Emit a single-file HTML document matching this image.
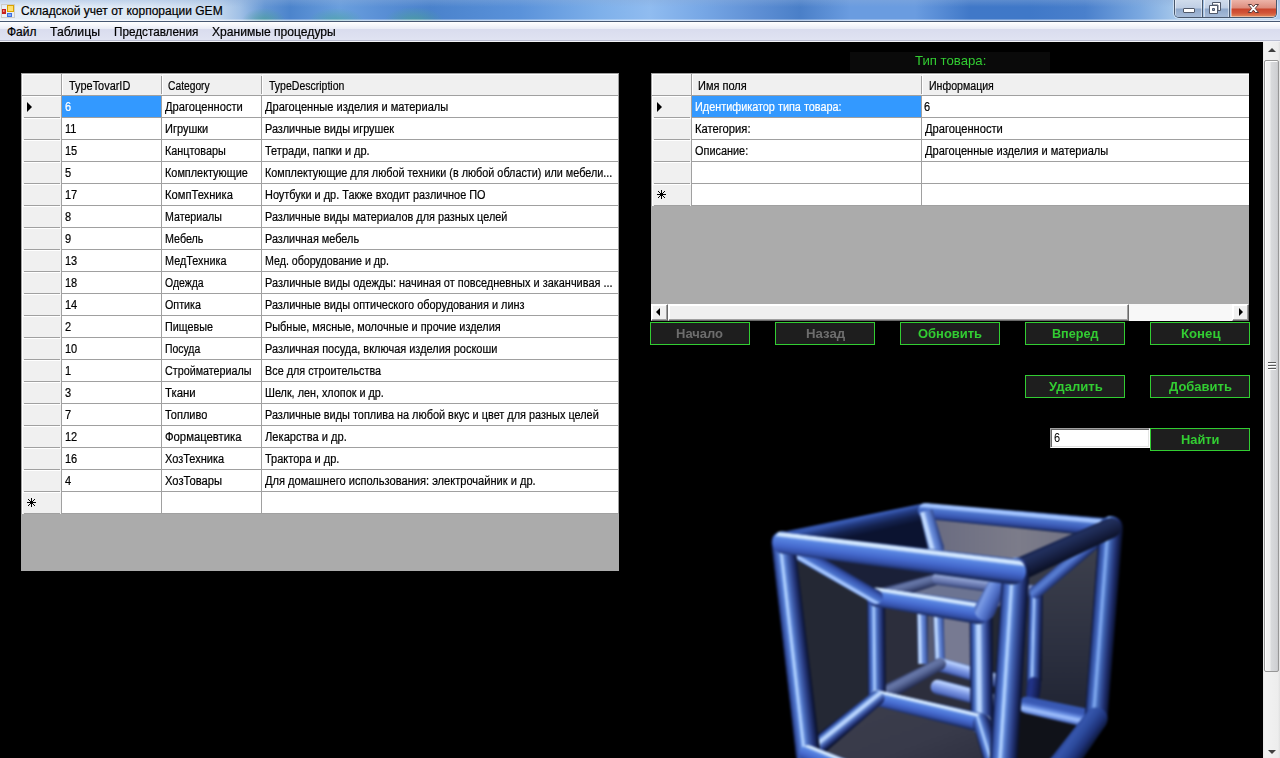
<!DOCTYPE html>
<html><head><meta charset="utf-8"><title>GEM</title>
<style>
html,body{margin:0;padding:0;background:#000;}
body{width:1280px;height:758px;overflow:hidden;position:relative;font-family:"Liberation Sans",sans-serif;font-size:12px;color:#000;}
div,span,i,b{box-sizing:border-box;}
span{transform-origin:0 0;display:block;}
#title{position:absolute;left:0;top:0;width:1280px;height:21px;overflow:hidden;
 background:linear-gradient(90deg,#e6eef8 0px,#dde8f5 150px,#c8daef 215px,#a0c0e6 240px,#6496d4 265px,#4c84cc 290px,#6a9fde 340px,#5a90d6 380px,#4a82cc 430px,#5a92da 520px,#7eb0ea 600px,#90bcf0 650px,#78a8e6 700px,#5f90d5 755px,#4a7fc8 800px,#6a9ce0 850px,#6a9ce0 915px,#4078c8 970px,#3f78c8 1030px,#4a80cc 1085px,#7aa8e0 1140px,#a4c6ea 1175px,#b0cdee 1280px);}
#title .sh{position:absolute;left:0;top:0;width:1280px;height:21px;background:linear-gradient(180deg,rgba(140,172,216,.38) 0,rgba(140,172,216,0) 7px),linear-gradient(180deg,rgba(255,255,255,0) 0,rgba(255,255,255,0) 19px,rgba(255,255,255,.55) 20px,rgba(255,255,255,.7) 21px),radial-gradient(ellipse 22px 13px at 264px 21px,rgba(74,160,150,.75),rgba(74,160,150,0)),radial-gradient(ellipse 28px 13px at 336px 21px,rgba(74,165,160,.7),rgba(74,160,150,0)),radial-gradient(ellipse 30px 14px at 414px 21px,rgba(74,160,150,.75),rgba(74,160,150,0));}
#tline{position:absolute;left:0;top:21px;width:1280px;height:1px;background:#475872;}
#ttext{position:absolute;left:0;top:0;width:600px;height:21px;}
#ttext span{position:absolute;font-size:12px;line-height:15px;white-space:nowrap;color:#000;-webkit-text-stroke:0.2px #000;}
#menu{position:absolute;left:0;top:22px;width:1280px;height:20px;background:linear-gradient(180deg,#ffffff 0,#fdfdfe 1px,#e9ecf6 7px,#d9dcee 7px,#e0e3f2 18px,#b9bdd0 18px,#b9bdd0 19px,#f2f2f6 19px,#f2f2f6 20px);}
#menu span{position:absolute;font-size:12px;line-height:15px;white-space:nowrap;-webkit-text-stroke:0.2px #000;}
.grid{position:absolute;background:#ababab;overflow:hidden;}
.grid div{position:absolute;}
.lines{background:#a0a0a0;}
.rh{background:#f0f0f0;border-left:1px solid #fff;border-top:1px solid #fff;}
.rh b{position:absolute;left:1px;right:1px;bottom:0;height:1px;background:#a0a0a0;}
.rh.hd b{display:none}
.ch{background:#f0f0f0;border-left:1px solid #fff;border-top:1px solid #fff;}
.ch span,.c span{position:absolute;line-height:14px;white-space:nowrap;-webkit-text-stroke:0.2px #000;}
.c.sel span{-webkit-text-stroke:0.2px #fff;}
.c{background:#fff;overflow:hidden;}
.c.sel{background:#3399ff;color:#fff;}
.btn{position:absolute;width:100px;height:23px;background:#1e1e1e;border:1px solid #32cd32;color:#32cd32;font-weight:bold;font-size:13px;}
.btn span{position:absolute;line-height:15px;white-space:nowrap;}
.btn.dis{color:#6d6d6d;}
#lbl{position:absolute;left:850px;top:52px;width:200px;height:20px;background:#0a0a0a;color:#32cd32;font-size:13px;}
#lbl span{position:absolute;line-height:15px;white-space:nowrap;}
</style></head><body>
<div id="title"><div class="sh"></div></div>
<div id="ttext"><span style="left:21.00px;top:4px;transform:scaleX(1.0000);">Складской учет от корпорации GEM</span></div>
<div id="tline"></div>
<div id="menu"><span style="left:7.00px;top:3px;transform:scaleX(1.0000);">Файл</span><span style="left:50.00px;top:3px;transform:scaleX(1.0204);">Таблицы</span><span style="left:114.00px;top:3px;transform:scaleX(0.9767);">Представления</span><span style="left:212.00px;top:3px;transform:scaleX(1.0082);">Хранимые процедуры</span></div>
<div class="grid" style="left:21px;top:73px;width:598px;height:498px">
<div class="lines" style="left:0;top:0;width:598px;height:441px"></div>
<div class="rh hd" style="left:1px;top:1px;width:39px;height:21px"></div>
<div class="ch" style="left:41px;top:1px;width:99px;height:21px"><span style="left:5.50px;top:4px;transform:scaleX(0.9096);">TypeTovarID</span></div>
<div class="ch" style="left:141px;top:1px;width:99px;height:21px"><span style="left:4.50px;top:4px;transform:scaleX(0.8559);">Category</span></div>
<div class="ch" style="left:241px;top:1px;width:356px;height:21px"><span style="left:5.50px;top:4px;transform:scaleX(0.8764);">TypeDescription</span></div>
<div style="left:140px;top:1px;width:1px;height:2px;background:#f0f0f0"></div><div style="left:140px;top:21px;width:1px;height:1px;background:#f0f0f0"></div>
<div style="left:240px;top:1px;width:1px;height:2px;background:#f0f0f0"></div><div style="left:240px;top:21px;width:1px;height:1px;background:#f0f0f0"></div>
<div class="rh" style="left:1px;top:23px;width:39px;height:22px"><i class="arrow"></i><b></b></div>
<div class="c sel" style="left:41px;top:23px;width:99px;height:21px"><span style="left:3.00px;top:4px;transform:scaleX(0.9170);">6</span></div>
<div class="c" style="left:141px;top:23px;width:99px;height:21px"><span style="left:3.00px;top:4px;transform:scaleX(0.9289);">Драгоценности</span></div>
<div class="c" style="left:241px;top:23px;width:356px;height:21px"><span style="left:3.00px;top:4px;transform:scaleX(0.9220);">Драгоценные изделия и материалы</span></div>
<div class="rh" style="left:1px;top:45px;width:39px;height:22px"><b></b></div>
<div class="c" style="left:41px;top:45px;width:99px;height:21px"><span style="left:3.00px;top:4px;transform:scaleX(0.9170);">11</span></div>
<div class="c" style="left:141px;top:45px;width:99px;height:21px"><span style="left:3.00px;top:4px;transform:scaleX(0.9170);">Игрушки</span></div>
<div class="c" style="left:241px;top:45px;width:356px;height:21px"><span style="left:3.00px;top:4px;transform:scaleX(0.9099);">Различные виды игрушек</span></div>
<div class="rh" style="left:1px;top:67px;width:39px;height:22px"><b></b></div>
<div class="c" style="left:41px;top:67px;width:99px;height:21px"><span style="left:3.00px;top:4px;transform:scaleX(0.9170);">15</span></div>
<div class="c" style="left:141px;top:67px;width:99px;height:21px"><span style="left:3.00px;top:4px;transform:scaleX(0.9022);">Канцтовары</span></div>
<div class="c" style="left:241px;top:67px;width:356px;height:21px"><span style="left:3.00px;top:4px;transform:scaleX(0.9170);">Тетради, папки и др.</span></div>
<div class="rh" style="left:1px;top:89px;width:39px;height:22px"><b></b></div>
<div class="c" style="left:41px;top:89px;width:99px;height:21px"><span style="left:3.00px;top:4px;transform:scaleX(0.9170);">5</span></div>
<div class="c" style="left:141px;top:89px;width:99px;height:21px"><span style="left:3.00px;top:4px;transform:scaleX(0.9061);">Комплектующие</span></div>
<div class="c" style="left:241px;top:89px;width:356px;height:21px"><span style="left:3.00px;top:4px;transform:scaleX(0.9014);">Комплектующие для любой техники (в любой области) или мебели...</span></div>
<div class="rh" style="left:1px;top:111px;width:39px;height:22px"><b></b></div>
<div class="c" style="left:41px;top:111px;width:99px;height:21px"><span style="left:3.00px;top:4px;transform:scaleX(0.9170);">17</span></div>
<div class="c" style="left:141px;top:111px;width:99px;height:21px"><span style="left:3.00px;top:4px;transform:scaleX(0.9307);">КомпТехника</span></div>
<div class="c" style="left:241px;top:111px;width:356px;height:21px"><span style="left:3.00px;top:4px;transform:scaleX(0.9088);">Ноутбуки и др. Также входит различное ПО</span></div>
<div class="rh" style="left:1px;top:133px;width:39px;height:22px"><b></b></div>
<div class="c" style="left:41px;top:133px;width:99px;height:21px"><span style="left:3.00px;top:4px;transform:scaleX(0.9170);">8</span></div>
<div class="c" style="left:141px;top:133px;width:99px;height:21px"><span style="left:3.00px;top:4px;transform:scaleX(0.8859);">Материалы</span></div>
<div class="c" style="left:241px;top:133px;width:356px;height:21px"><span style="left:3.00px;top:4px;transform:scaleX(0.9058);">Различные виды материалов для разных целей</span></div>
<div class="rh" style="left:1px;top:155px;width:39px;height:22px"><b></b></div>
<div class="c" style="left:41px;top:155px;width:99px;height:21px"><span style="left:3.00px;top:4px;transform:scaleX(0.9170);">9</span></div>
<div class="c" style="left:141px;top:155px;width:99px;height:21px"><span style="left:3.00px;top:4px;transform:scaleX(0.8935);">Мебель</span></div>
<div class="c" style="left:241px;top:155px;width:356px;height:21px"><span style="left:3.00px;top:4px;transform:scaleX(0.9073);">Различная мебель</span></div>
<div class="rh" style="left:1px;top:177px;width:39px;height:22px"><b></b></div>
<div class="c" style="left:41px;top:177px;width:99px;height:21px"><span style="left:3.00px;top:4px;transform:scaleX(0.9170);">13</span></div>
<div class="c" style="left:141px;top:177px;width:99px;height:21px"><span style="left:3.00px;top:4px;transform:scaleX(0.9024);">МедТехника</span></div>
<div class="c" style="left:241px;top:177px;width:356px;height:21px"><span style="left:3.00px;top:4px;transform:scaleX(0.8883);">Мед. оборудование и др.</span></div>
<div class="rh" style="left:1px;top:199px;width:39px;height:22px"><b></b></div>
<div class="c" style="left:41px;top:199px;width:99px;height:21px"><span style="left:3.00px;top:4px;transform:scaleX(0.9170);">18</span></div>
<div class="c" style="left:141px;top:199px;width:99px;height:21px"><span style="left:3.00px;top:4px;transform:scaleX(0.8723);">Одежда</span></div>
<div class="c" style="left:241px;top:199px;width:356px;height:21px"><span style="left:3.00px;top:4px;transform:scaleX(0.9117);">Различные виды одежды: начиная от повседневных и заканчивая ...</span></div>
<div class="rh" style="left:1px;top:221px;width:39px;height:22px"><b></b></div>
<div class="c" style="left:41px;top:221px;width:99px;height:21px"><span style="left:3.00px;top:4px;transform:scaleX(0.9170);">14</span></div>
<div class="c" style="left:141px;top:221px;width:99px;height:21px"><span style="left:3.00px;top:4px;transform:scaleX(0.8922);">Оптика</span></div>
<div class="c" style="left:241px;top:221px;width:356px;height:21px"><span style="left:3.00px;top:4px;transform:scaleX(0.9100);">Различные виды оптического оборудования и линз</span></div>
<div class="rh" style="left:1px;top:243px;width:39px;height:22px"><b></b></div>
<div class="c" style="left:41px;top:243px;width:99px;height:21px"><span style="left:3.00px;top:4px;transform:scaleX(0.9170);">2</span></div>
<div class="c" style="left:141px;top:243px;width:99px;height:21px"><span style="left:3.00px;top:4px;transform:scaleX(0.8983);">Пищевые</span></div>
<div class="c" style="left:241px;top:243px;width:356px;height:21px"><span style="left:3.00px;top:4px;transform:scaleX(0.9093);">Рыбные, мясные, молочные и прочие изделия</span></div>
<div class="rh" style="left:1px;top:265px;width:39px;height:22px"><b></b></div>
<div class="c" style="left:41px;top:265px;width:99px;height:21px"><span style="left:3.00px;top:4px;transform:scaleX(0.9170);">10</span></div>
<div class="c" style="left:141px;top:265px;width:99px;height:21px"><span style="left:3.00px;top:4px;transform:scaleX(0.8687);">Посуда</span></div>
<div class="c" style="left:241px;top:265px;width:356px;height:21px"><span style="left:3.00px;top:4px;transform:scaleX(0.9131);">Различная посуда, включая изделия роскоши</span></div>
<div class="rh" style="left:1px;top:287px;width:39px;height:22px"><b></b></div>
<div class="c" style="left:41px;top:287px;width:99px;height:21px"><span style="left:3.00px;top:4px;transform:scaleX(0.9170);">1</span></div>
<div class="c" style="left:141px;top:287px;width:99px;height:21px"><span style="left:3.00px;top:4px;transform:scaleX(0.8962);">Стройматериалы</span></div>
<div class="c" style="left:241px;top:287px;width:356px;height:21px"><span style="left:3.00px;top:4px;transform:scaleX(0.9016);">Все для строительства</span></div>
<div class="rh" style="left:1px;top:309px;width:39px;height:22px"><b></b></div>
<div class="c" style="left:41px;top:309px;width:99px;height:21px"><span style="left:3.00px;top:4px;transform:scaleX(0.9170);">3</span></div>
<div class="c" style="left:141px;top:309px;width:99px;height:21px"><span style="left:3.00px;top:4px;transform:scaleX(0.9486);">Ткани</span></div>
<div class="c" style="left:241px;top:309px;width:356px;height:21px"><span style="left:3.00px;top:4px;transform:scaleX(0.9017);">Шелк, лен, хлопок и др.</span></div>
<div class="rh" style="left:1px;top:331px;width:39px;height:22px"><b></b></div>
<div class="c" style="left:41px;top:331px;width:99px;height:21px"><span style="left:3.00px;top:4px;transform:scaleX(0.9170);">7</span></div>
<div class="c" style="left:141px;top:331px;width:99px;height:21px"><span style="left:3.00px;top:4px;transform:scaleX(0.9170);">Топливо</span></div>
<div class="c" style="left:241px;top:331px;width:356px;height:21px"><span style="left:3.00px;top:4px;transform:scaleX(0.9088);">Различные виды топлива на любой вкус и цвет для разных целей</span></div>
<div class="rh" style="left:1px;top:353px;width:39px;height:22px"><b></b></div>
<div class="c" style="left:41px;top:353px;width:99px;height:21px"><span style="left:3.00px;top:4px;transform:scaleX(0.9170);">12</span></div>
<div class="c" style="left:141px;top:353px;width:99px;height:21px"><span style="left:3.00px;top:4px;transform:scaleX(0.9415);">Формацевтика</span></div>
<div class="c" style="left:241px;top:353px;width:356px;height:21px"><span style="left:3.00px;top:4px;transform:scaleX(0.9285);">Лекарства и др.</span></div>
<div class="rh" style="left:1px;top:375px;width:39px;height:22px"><b></b></div>
<div class="c" style="left:41px;top:375px;width:99px;height:21px"><span style="left:3.00px;top:4px;transform:scaleX(0.9170);">16</span></div>
<div class="c" style="left:141px;top:375px;width:99px;height:21px"><span style="left:3.00px;top:4px;transform:scaleX(0.9170);">ХозТехника</span></div>
<div class="c" style="left:241px;top:375px;width:356px;height:21px"><span style="left:3.00px;top:4px;transform:scaleX(0.9170);">Трактора и др.</span></div>
<div class="rh" style="left:1px;top:397px;width:39px;height:22px"><b></b></div>
<div class="c" style="left:41px;top:397px;width:99px;height:21px"><span style="left:3.00px;top:4px;transform:scaleX(0.9170);">4</span></div>
<div class="c" style="left:141px;top:397px;width:99px;height:21px"><span style="left:3.00px;top:4px;transform:scaleX(0.9334);">ХозТовары</span></div>
<div class="c" style="left:241px;top:397px;width:356px;height:21px"><span style="left:3.00px;top:4px;transform:scaleX(0.9238);">Для домашнего использования: электрочайник и др.</span></div>
<div class="rh" style="left:1px;top:419px;width:39px;height:22px"><i class="star"><svg width="9" height="9" viewBox="0 0 9 9" shape-rendering="crispEdges"><path d="M4 0h1v9h-1zM0 4h9v1h-9zM3 3h3v3h-3zM1 1h1v1h-1zM2 2h1v1h-1zM6 6h1v1h-1zM7 7h1v1h-1zM7 1h1v1h-1zM6 2h1v1h-1zM2 6h1v1h-1zM1 7h1v1h-1z" fill="#000"/></svg></i><b></b></div>
<div class="c" style="left:41px;top:419px;width:99px;height:21px"></div>
<div class="c" style="left:141px;top:419px;width:99px;height:21px"></div>
<div class="c" style="left:241px;top:419px;width:356px;height:21px"></div>
</div>
<div class="grid" style="left:651px;top:73px;width:598px;height:248px">
<div class="lines" style="left:0;top:0;width:598px;height:133px"></div>
<div class="rh hd" style="left:1px;top:1px;width:39px;height:21px"></div>
<div class="ch" style="left:41px;top:1px;width:229px;height:21px"><span style="left:5.00px;top:4px;transform:scaleX(0.9170);">Имя поля</span></div>
<div class="ch" style="left:271px;top:1px;width:327px;height:21px"><span style="left:6.00px;top:4px;transform:scaleX(0.8828);">Информация</span></div>
<div style="left:270px;top:1px;width:1px;height:2px;background:#f0f0f0"></div><div style="left:270px;top:21px;width:1px;height:1px;background:#f0f0f0"></div>
<div class="rh" style="left:1px;top:23px;width:39px;height:22px"><i class="arrow"></i><b></b></div>
<div class="c sel" style="left:41px;top:23px;width:229px;height:21px"><span style="left:3.00px;top:4px;transform:scaleX(0.9046);">Идентификатор типа товара:</span></div>
<div class="c" style="left:271px;top:23px;width:327px;height:21px"><span style="left:2.00px;top:4px;transform:scaleX(0.9170);">6</span></div>
<div class="rh" style="left:1px;top:45px;width:39px;height:22px"><b></b></div>
<div class="c" style="left:41px;top:45px;width:229px;height:21px"><span style="left:3.00px;top:4px;transform:scaleX(0.9340);">Категория:</span></div>
<div class="c" style="left:271px;top:45px;width:327px;height:21px"><span style="left:3.00px;top:4px;transform:scaleX(0.9289);">Драгоценности</span></div>
<div class="rh" style="left:1px;top:67px;width:39px;height:22px"><b></b></div>
<div class="c" style="left:41px;top:67px;width:229px;height:21px"><span style="left:3.00px;top:4px;transform:scaleX(0.9083);">Описание:</span></div>
<div class="c" style="left:271px;top:67px;width:327px;height:21px"><span style="left:3.00px;top:4px;transform:scaleX(0.9220);">Драгоценные изделия и материалы</span></div>
<div class="rh" style="left:1px;top:89px;width:39px;height:22px"><b></b></div>
<div class="c" style="left:41px;top:89px;width:229px;height:21px"></div>
<div class="c" style="left:271px;top:89px;width:327px;height:21px"></div>
<div class="rh" style="left:1px;top:111px;width:39px;height:22px"><i class="star"><svg width="9" height="9" viewBox="0 0 9 9" shape-rendering="crispEdges"><path d="M4 0h1v9h-1zM0 4h9v1h-9zM3 3h3v3h-3zM1 1h1v1h-1zM2 2h1v1h-1zM6 6h1v1h-1zM7 7h1v1h-1zM7 1h1v1h-1zM6 2h1v1h-1zM2 6h1v1h-1zM1 7h1v1h-1z" fill="#000"/></svg></i><b></b></div>
<div class="c" style="left:41px;top:111px;width:229px;height:21px"></div>
<div class="c" style="left:271px;top:111px;width:327px;height:21px"></div>
<div class="hs"><div class="hsl"><i></i></div><div class="hst"></div><div class="hstr"></div><div class="hsr"><i></i></div></div>
</div>
<div class="btn dis" style="left:650px;top:322px"><span style="left:24.50px;top:3px;transform:scaleX(0.9986);">Начало</span></div>
<div class="btn dis" style="left:775px;top:322px"><span style="left:30.00px;top:3px;transform:scaleX(1.0160);">Назад</span></div>
<div class="btn" style="left:900px;top:322px"><span style="left:17.00px;top:3px;transform:scaleX(0.9967);">Обновить</span></div>
<div class="btn" style="left:1025px;top:322px"><span style="left:25.60px;top:3px;transform:scaleX(0.9701);">Вперед</span></div>
<div class="btn" style="left:1150px;top:322px"><span style="left:29.50px;top:3px;transform:scaleX(1.0147);">Конец</span></div>
<div class="btn" style="left:1025px;top:375px"><span style="left:23.00px;top:3px;transform:scaleX(1.0070);">Удалить</span></div>
<div class="btn" style="left:1150px;top:375px"><span style="left:18.00px;top:3px;transform:scaleX(0.9983);">Добавить</span></div>
<div class="btn" style="left:1150px;top:428px"><span style="left:29.60px;top:3px;transform:scaleX(0.9880);">Найти</span></div>
<div id="lbl"><span style="left:64.80px;top:1px;transform:scaleX(1.0133);">Тип товара:</span></div>
<style>
.arrow{position:absolute;left:4px;top:5px;width:0;height:0;border-left:5px solid #000;border-top:5px solid transparent;border-bottom:5px solid transparent;}
.star{position:absolute;left:4px;top:5px;width:9px;height:9px;}
.star svg{position:absolute;left:0;top:0;}
.hs{left:0;top:231px;width:598px;height:17px;background:#f8f8f8;}
.hs div{top:0;height:17px;background:#f0f0f0;border-top:1px solid #fff;border-left:1px solid #fff;border-right:1px solid #696969;border-bottom:1px solid #696969;box-shadow:inset -1px -1px 0 #a0a0a0, inset 1px 1px 0 #fff;}
.hs .hsl{left:0;width:17px;}
.hs .hst{left:17px;width:461px;}
.hs .hstr{display:none;}
.hs .hsr{left:581px;width:17px;}
.hsl i{position:absolute;left:4px;top:3px;width:0;height:0;border-right:4px solid #000;border-top:4px solid transparent;border-bottom:4px solid transparent;}
.hsr i{position:absolute;left:6px;top:3px;width:0;height:0;border-left:4px solid #000;border-top:4px solid transparent;border-bottom:4px solid transparent;}
#tb{position:absolute;left:1050px;top:428px;width:100px;height:20px;background:#fff;border-top:1px solid #a0a0a0;border-left:1px solid #a0a0a0;border-right:1px solid #fff;border-bottom:1px solid #fff;box-shadow:inset 1px 1px 0 #696969, inset -1px -1px 0 #e3e3e3;}
#tb span{position:absolute;left:3px;top:2px;font-size:12px;line-height:14px;transform:scaleX(.917);}
#vs{position:absolute;left:1263px;top:42px;width:17px;height:716px;background:linear-gradient(90deg,#e8e8e8 0,#f3f3f3 2px,#f0f0f0 8px,#ededed 15px,#e0e0e0 17px);}
#vs .th{position:absolute;left:1px;top:18px;width:15px;height:612px;border:1px solid #979797;border-radius:2px;background:linear-gradient(90deg,#f4f4f4 0,#f0f0f0 5px,#d9dadc 6px,#cfd0d3 12px,#c4c5c8 13px);box-shadow:inset 1px 1px 0 #fff;}
#vs .gr{position:absolute;left:5px;top:320px;width:8px;height:8px;background:linear-gradient(180deg,#5a5a5a 0,#5a5a5a 1px,#fff 1px,#fff 2px,transparent 2px,transparent 3px,#5a5a5a 3px,#5a5a5a 4px,#fff 4px,#fff 5px,transparent 5px,transparent 6px,#5a5a5a 6px,#5a5a5a 7px,#fff 7px,#fff 8px);}
#vs .up{position:absolute;left:5px;top:6px;width:0;height:0;border-bottom:4px solid #404040;border-left:4px solid transparent;border-right:4px solid transparent;}
#vs .dn{position:absolute;left:5px;top:708px;width:0;height:0;border-top:4px solid #404040;border-left:4px solid transparent;border-right:4px solid transparent;}
#cap{position:absolute;left:1174px;top:0;width:103px;height:18px;border:1px solid #47566b;border-top:none;border-radius:0 0 5px 5px;overflow:hidden;box-shadow:0 0 0 1px rgba(255,255,255,.45);}
#cap div{position:absolute;top:0;height:17px;}
#cap .mn{left:0;width:28px;background:linear-gradient(180deg,#d0dcec 0,#bfcee4 8px,#8fa8ca 9px,#a6bbd8 17px);border-right:1px solid #47566b;box-shadow:inset 1px 0 0 rgba(255,255,255,.5),inset -1px 0 0 rgba(255,255,255,.5);}
#cap .mx{left:29px;width:26px;background:linear-gradient(180deg,#d0dcec 0,#bfcee4 8px,#8fa8ca 9px,#a6bbd8 17px);border-right:1px solid #47566b;box-shadow:inset 1px 0 0 rgba(255,255,255,.5),inset -1px 0 0 rgba(255,255,255,.5);}
#cap .cl{left:56px;width:47px;background:linear-gradient(180deg,#ecb4a8 0,#dd8c7c 8px,#c9452c 9px,#d2553a 13px,#e08a5c 17px);box-shadow:inset 1px 0 0 rgba(255,255,255,.4),inset -1px -1px 0 rgba(255,255,255,.4);}
#cap .g1{left:8px;top:8px;width:12px;height:5px;background:#fff;border:1px solid #50596a;border-radius:1px;}
#icon{position:absolute;left:1px;top:4px;width:14px;height:14px;}
</style>
<div id="tb"><span>6</span></div>
<div id="vs"><div class="th"></div><div class="gr"></div><div class="up"></div><div class="dn"></div></div>
<div id="cap"><div class="mn"></div><div class="mx"></div><div class="cl"></div><div class="g1"></div>
<svg style="position:absolute;left:27px;top:0" width="76" height="17" viewBox="0 0 76 17">
 <g fill="#fff" stroke="#50596a" stroke-width="1">
  <path d="M10.5 2.5h8v8h-2.5v-5.5h-5.5z"/>
  <path d="M7.5 5.5h8v8h-8z M10.5 8.500h2v2h-2z" fill-rule="evenodd"/>
 </g>
 <path d="M46.3 4.500h3.200l1.900 2.300 1.900-2.300h3.200l-3.300 3.900 3.400 4.100h-3.300l-1.900-2.400-1.900 2.400h-3.300l3.400-4.100z" fill="#fff" stroke="#5a3a3a" stroke-width="1" stroke-linejoin="round"/>
</svg></div>
<svg id="icon" viewBox="0 0 14 14"><rect x="0.5" y="0.500" width="13" height="13" fill="rgba(255,255,255,.12)" stroke="#c9c4bb" stroke-opacity=".8" stroke-width="1"/>
<rect x="1" y="5" width="4" height="5" fill="#c8201c"/><rect x="2" y="6" width="1.500" height="2" fill="#f08a80"/>
<rect x="6" y="1" width="7" height="7" fill="#d9a400"/><rect x="7" y="2" width="5" height="5" fill="#ffe070"/>
<rect x="6" y="9" width="5" height="4" fill="#3d6fe0"/><rect x="7" y="10" width="3" height="2" fill="#88aaf5"/></svg>
<svg id="cube" style="position:absolute;left:0;top:0" width="1263" height="758" viewBox="0 0 1263 758"><defs><filter id="bl" x="-5%" y="-5%" width="110%" height="110%" color-interpolation-filters="sRGB"><feGaussianBlur stdDeviation="0.9"/></filter><linearGradient id="rf" x1="0" y1="0" x2="0" y2="1"><stop offset="0" stop-color="#40434f"/><stop offset="0.5" stop-color="#2c3040"/><stop offset="1" stop-color="#161a28"/></linearGradient><linearGradient id="fl" x1="0" y1="0" x2="1" y2="1"><stop offset="0" stop-color="#3c3e4c"/><stop offset="0.6" stop-color="#383a4a"/><stop offset="1" stop-color="#2c2e3e"/></linearGradient><linearGradient id="tf" x1="0" y1="0" x2="1" y2="0"><stop offset="0" stop-color="#686a80"/><stop offset="0.5" stop-color="#7c7c8a"/><stop offset="1" stop-color="#6a6c80"/></linearGradient><linearGradient id="g1" gradientUnits="userSpaceOnUse" x1="852.4" y1="517.7" x2="856.6" y2="536.3"><stop offset="0" stop-color="#3050a4"/><stop offset="0.12" stop-color="#3a5cb4"/><stop offset="0.35" stop-color="#223a80"/><stop offset="0.65" stop-color="#14224e"/><stop offset="1" stop-color="#0a1230"/></linearGradient><linearGradient id="g2" gradientUnits="userSpaceOnUse" x1="1019.3" y1="510.8" x2="1017.7" y2="528.2"><stop offset="0" stop-color="#30509c"/><stop offset="0.08" stop-color="#9cc0ff"/><stop offset="0.24" stop-color="#a8c8ff"/><stop offset="0.36" stop-color="#4f78d0"/><stop offset="0.65" stop-color="#3c5cb8"/><stop offset="0.85" stop-color="#2c4494"/><stop offset="1" stop-color="#16244e"/></linearGradient><linearGradient id="g3" gradientUnits="userSpaceOnUse" x1="924.0" y1="531.4" x2="938.0" y2="527.6"><stop offset="0" stop-color="#4060a8"/><stop offset="0.1" stop-color="#b8d4ff"/><stop offset="0.3" stop-color="#c4dcff"/><stop offset="0.45" stop-color="#7094e0"/><stop offset="0.75" stop-color="#5070c0"/><stop offset="1" stop-color="#2c4080"/></linearGradient><linearGradient id="g4" gradientUnits="userSpaceOnUse" x1="917.5" y1="638.1" x2="927.5" y2="637.9"><stop offset="0" stop-color="#4060a8"/><stop offset="0.1" stop-color="#b8d4ff"/><stop offset="0.3" stop-color="#c4dcff"/><stop offset="0.45" stop-color="#7094e0"/><stop offset="0.75" stop-color="#5070c0"/><stop offset="1" stop-color="#2c4080"/></linearGradient><linearGradient id="g5" gradientUnits="userSpaceOnUse" x1="934.0" y1="632.2" x2="944.0" y2="631.8"><stop offset="0" stop-color="#4060a8"/><stop offset="0.1" stop-color="#b8d4ff"/><stop offset="0.3" stop-color="#c4dcff"/><stop offset="0.45" stop-color="#7094e0"/><stop offset="0.75" stop-color="#5070c0"/><stop offset="1" stop-color="#2c4080"/></linearGradient><linearGradient id="g6" gradientUnits="userSpaceOnUse" x1="905.2" y1="581.8" x2="908.8" y2="594.2"><stop offset="0" stop-color="#3a4878"/><stop offset="0.2" stop-color="#6878a8"/><stop offset="0.45" stop-color="#5c6c9c"/><stop offset="0.75" stop-color="#3c4874"/><stop offset="1" stop-color="#20284a"/></linearGradient><linearGradient id="g7" gradientUnits="userSpaceOnUse" x1="987.8" y1="579.3" x2="986.2" y2="591.7"><stop offset="0" stop-color="#5868a0"/><stop offset="0.15" stop-color="#98acd8"/><stop offset="0.4" stop-color="#8090c4"/><stop offset="0.75" stop-color="#5868a0"/><stop offset="1" stop-color="#303c68"/></linearGradient><linearGradient id="g8" gradientUnits="userSpaceOnUse" x1="975.4" y1="667.3" x2="971.6" y2="680.7"><stop offset="0" stop-color="#5070c0"/><stop offset="0.1" stop-color="#c0d8ff"/><stop offset="0.25" stop-color="#a8c0f8"/><stop offset="0.5" stop-color="#7c98e4"/><stop offset="0.8" stop-color="#5a74c8"/><stop offset="1" stop-color="#2c4080"/></linearGradient><linearGradient id="g9" gradientUnits="userSpaceOnUse" x1="970.9" y1="687.7" x2="967.1" y2="702.3"><stop offset="0" stop-color="#5070c0"/><stop offset="0.1" stop-color="#c0d8ff"/><stop offset="0.25" stop-color="#a8c0f8"/><stop offset="0.5" stop-color="#7c98e4"/><stop offset="0.8" stop-color="#5a74c8"/><stop offset="1" stop-color="#2c4080"/></linearGradient><linearGradient id="g10" gradientUnits="userSpaceOnUse" x1="905.1" y1="674.6" x2="911.9" y2="687.4"><stop offset="0" stop-color="#3a4878"/><stop offset="0.2" stop-color="#6878a8"/><stop offset="0.45" stop-color="#5c6c9c"/><stop offset="0.75" stop-color="#3c4874"/><stop offset="1" stop-color="#20284a"/></linearGradient><linearGradient id="g11" gradientUnits="userSpaceOnUse" x1="1027.8" y1="635.8" x2="1042.2" y2="636.2"><stop offset="0" stop-color="#0a1230"/><stop offset="0.07" stop-color="#2a4290"/><stop offset="0.18" stop-color="#4668bc"/><stop offset="0.28" stop-color="#5c86dc"/><stop offset="0.33" stop-color="#a8ccff"/><stop offset="0.39" stop-color="#b8d6ff"/><stop offset="0.45" stop-color="#6a92e0"/><stop offset="0.56" stop-color="#4668b8"/><stop offset="0.76" stop-color="#27397f"/><stop offset="0.92" stop-color="#121d48"/><stop offset="1" stop-color="#0a1028"/></linearGradient><linearGradient id="g12" gradientUnits="userSpaceOnUse" x1="1026.5" y1="688.3" x2="1040.5" y2="689.7"><stop offset="0" stop-color="#1c2c74"/><stop offset="0.3" stop-color="#22348a"/><stop offset="0.7" stop-color="#182460"/><stop offset="1" stop-color="#0e163c"/></linearGradient><linearGradient id="g13" gradientUnits="userSpaceOnUse" x1="1069.1" y1="554.9" x2="1077.9" y2="565.1"><stop offset="0" stop-color="#24387c"/><stop offset="0.15" stop-color="#4a6cc0"/><stop offset="0.4" stop-color="#5a80d4"/><stop offset="0.7" stop-color="#3854a8"/><stop offset="1" stop-color="#1a2858"/></linearGradient><linearGradient id="g14" gradientUnits="userSpaceOnUse" x1="1058.4" y1="702.7" x2="1054.6" y2="720.3"><stop offset="0" stop-color="#3454ac"/><stop offset="0.35" stop-color="#3c5cb8"/><stop offset="0.55" stop-color="#6a90e4"/><stop offset="0.7" stop-color="#a4c4ff"/><stop offset="0.8" stop-color="#86a8f0"/><stop offset="0.92" stop-color="#5a7cd0"/><stop offset="1" stop-color="#2a4080"/></linearGradient><linearGradient id="g15" gradientUnits="userSpaceOnUse" x1="1091.8" y1="622.6" x2="1115.2" y2="624.4"><stop offset="0" stop-color="#0a1230"/><stop offset="0.07" stop-color="#223880"/><stop offset="0.18" stop-color="#3858a8"/><stop offset="0.28" stop-color="#4a70c8"/><stop offset="0.34" stop-color="#7aa4ec"/><stop offset="0.4" stop-color="#84acf0"/><stop offset="0.47" stop-color="#5078c8"/><stop offset="0.58" stop-color="#3858a4"/><stop offset="0.76" stop-color="#223274"/><stop offset="0.92" stop-color="#101a44"/><stop offset="1" stop-color="#0a1028"/></linearGradient><linearGradient id="g16" gradientUnits="userSpaceOnUse" x1="1059.1" y1="539.7" x2="1067.9" y2="559.3"><stop offset="0" stop-color="#16224c"/><stop offset="0.15" stop-color="#22305e"/><stop offset="0.4" stop-color="#1c2850"/><stop offset="0.7" stop-color="#141c3c"/><stop offset="1" stop-color="#0a1024"/></linearGradient><linearGradient id="g17" gradientUnits="userSpaceOnUse" x1="1068.4" y1="735.6" x2="1088.6" y2="750.4"><stop offset="0" stop-color="#2a4698"/><stop offset="0.15" stop-color="#3656ac"/><stop offset="0.4" stop-color="#2c4a9c"/><stop offset="0.7" stop-color="#1e3278"/><stop offset="1" stop-color="#0c1636"/></linearGradient><linearGradient id="g18" gradientUnits="userSpaceOnUse" x1="867.5" y1="647.6" x2="885.5" y2="647.4"><stop offset="0" stop-color="#0a1230"/><stop offset="0.07" stop-color="#2a4290"/><stop offset="0.18" stop-color="#4668bc"/><stop offset="0.28" stop-color="#5c86dc"/><stop offset="0.33" stop-color="#a8ccff"/><stop offset="0.39" stop-color="#b8d6ff"/><stop offset="0.45" stop-color="#6a92e0"/><stop offset="0.56" stop-color="#4668b8"/><stop offset="0.76" stop-color="#27397f"/><stop offset="0.92" stop-color="#121d48"/><stop offset="1" stop-color="#0a1028"/></linearGradient><linearGradient id="g19" gradientUnits="userSpaceOnUse" x1="970.0" y1="668.1" x2="993.0" y2="667.9"><stop offset="0" stop-color="#0a1230"/><stop offset="0.08" stop-color="#2a4290"/><stop offset="0.2" stop-color="#5078c8"/><stop offset="0.32" stop-color="#b4d2ff"/><stop offset="0.44" stop-color="#c0daff"/><stop offset="0.56" stop-color="#5a7cc8"/><stop offset="0.76" stop-color="#2a3d86"/><stop offset="0.92" stop-color="#121d48"/><stop offset="1" stop-color="#0a1028"/></linearGradient><linearGradient id="g20" gradientUnits="userSpaceOnUse" x1="929.1" y1="594.9" x2="925.9" y2="615.1"><stop offset="0" stop-color="#3a5aa8"/><stop offset="0.05" stop-color="#cfe4ff"/><stop offset="0.17" stop-color="#d8ecff"/><stop offset="0.27" stop-color="#5a88e4"/><stop offset="0.6" stop-color="#4468cc"/><stop offset="0.82" stop-color="#3450a8"/><stop offset="1" stop-color="#1a2a5c"/></linearGradient><linearGradient id="g21" gradientUnits="userSpaceOnUse" x1="981.7" y1="594.3" x2="999.3" y2="602.7"><stop offset="0" stop-color="#4a68b8"/><stop offset="0.15" stop-color="#7c9ce4"/><stop offset="0.4" stop-color="#6284d8"/><stop offset="0.7" stop-color="#4866bc"/><stop offset="1" stop-color="#2a3c80"/></linearGradient><linearGradient id="g22" gradientUnits="userSpaceOnUse" x1="931.5" y1="702.0" x2="927.5" y2="719.0"><stop offset="0" stop-color="#3a5aa8"/><stop offset="0.05" stop-color="#cfe4ff"/><stop offset="0.17" stop-color="#d8ecff"/><stop offset="0.27" stop-color="#5a88e4"/><stop offset="0.6" stop-color="#4468cc"/><stop offset="0.82" stop-color="#3450a8"/><stop offset="1" stop-color="#1a2a5c"/></linearGradient><linearGradient id="g23" gradientUnits="userSpaceOnUse" x1="825.7" y1="576.5" x2="833.3" y2="563.5"><stop offset="0" stop-color="#30509c"/><stop offset="0.08" stop-color="#9cc0ff"/><stop offset="0.24" stop-color="#a8c8ff"/><stop offset="0.36" stop-color="#4f78d0"/><stop offset="0.65" stop-color="#3c5cb8"/><stop offset="0.85" stop-color="#2c4494"/><stop offset="1" stop-color="#16244e"/></linearGradient><linearGradient id="g24" gradientUnits="userSpaceOnUse" x1="837.0" y1="719.2" x2="848.0" y2="732.8"><stop offset="0" stop-color="#0a1230"/><stop offset="0.08" stop-color="#2a4290"/><stop offset="0.2" stop-color="#5078c8"/><stop offset="0.32" stop-color="#b4d2ff"/><stop offset="0.44" stop-color="#c0daff"/><stop offset="0.56" stop-color="#5a7cc8"/><stop offset="0.76" stop-color="#2a3d86"/><stop offset="0.92" stop-color="#121d48"/><stop offset="1" stop-color="#0a1028"/></linearGradient><linearGradient id="g25" gradientUnits="userSpaceOnUse" x1="979.9" y1="748.3" x2="998.1" y2="742.7"><stop offset="0" stop-color="#0a1230"/><stop offset="0.07" stop-color="#2a4290"/><stop offset="0.18" stop-color="#4668bc"/><stop offset="0.28" stop-color="#5c86dc"/><stop offset="0.33" stop-color="#a8ccff"/><stop offset="0.39" stop-color="#b8d6ff"/><stop offset="0.45" stop-color="#6a92e0"/><stop offset="0.56" stop-color="#4668b8"/><stop offset="0.76" stop-color="#27397f"/><stop offset="0.92" stop-color="#121d48"/><stop offset="1" stop-color="#0a1028"/></linearGradient><linearGradient id="g26" gradientUnits="userSpaceOnUse" x1="783.3" y1="649.9" x2="807.7" y2="647.1"><stop offset="0" stop-color="#0a1230"/><stop offset="0.07" stop-color="#2a4290"/><stop offset="0.18" stop-color="#4668bc"/><stop offset="0.28" stop-color="#5c86dc"/><stop offset="0.33" stop-color="#a8ccff"/><stop offset="0.39" stop-color="#b8d6ff"/><stop offset="0.45" stop-color="#6a92e0"/><stop offset="0.56" stop-color="#4668b8"/><stop offset="0.76" stop-color="#27397f"/><stop offset="0.92" stop-color="#121d48"/><stop offset="1" stop-color="#0a1028"/></linearGradient><linearGradient id="g27" gradientUnits="userSpaceOnUse" x1="995.8" y1="669.6" x2="1023.2" y2="671.4"><stop offset="0" stop-color="#0a1230"/><stop offset="0.07" stop-color="#2a4290"/><stop offset="0.18" stop-color="#4668bc"/><stop offset="0.28" stop-color="#5c86dc"/><stop offset="0.33" stop-color="#a8ccff"/><stop offset="0.39" stop-color="#b8d6ff"/><stop offset="0.45" stop-color="#6a92e0"/><stop offset="0.56" stop-color="#4668b8"/><stop offset="0.76" stop-color="#27397f"/><stop offset="0.92" stop-color="#121d48"/><stop offset="1" stop-color="#0a1028"/></linearGradient><linearGradient id="g28" gradientUnits="userSpaceOnUse" x1="899.4" y1="545.6" x2="896.6" y2="568.9"><stop offset="0" stop-color="#3a5aa8"/><stop offset="0.05" stop-color="#cfe4ff"/><stop offset="0.17" stop-color="#d8ecff"/><stop offset="0.27" stop-color="#5a88e4"/><stop offset="0.6" stop-color="#4468cc"/><stop offset="0.82" stop-color="#3450a8"/><stop offset="1" stop-color="#1a2a5c"/></linearGradient><linearGradient id="g29" gradientUnits="userSpaceOnUse" x1="837.6" y1="755.7" x2="830.4" y2="773.3"><stop offset="0" stop-color="#3a5aa8"/><stop offset="0.05" stop-color="#cfe4ff"/><stop offset="0.17" stop-color="#d8ecff"/><stop offset="0.27" stop-color="#5a88e4"/><stop offset="0.6" stop-color="#4468cc"/><stop offset="0.82" stop-color="#3450a8"/><stop offset="1" stop-color="#1a2a5c"/></linearGradient></defs><g filter="url(#bl)"><polygon points="783,543 926,511 1111,528 1096,719 1061,770 805,770" fill="#242834"/>
<polygon points="783,543 926,511 936,548 940,552" fill="#0b1330"/>
<polygon points="926,511 1111,528 1016,571 940,552 936,548" fill="url(#tf)"/>
<polygon points="1016,571 1111,528 1096,719 1061,770 1003,770" fill="url(#rf)"/>
<polygon points="1020,700 1027,705 1096,719 1061,770 1004,770" fill="#101219"/>
<polygon points="783,543 876,597 960,585 960,560" fill="#1a2038"/>
<polygon points="876,597 981,613 982,723 877,698" fill="#2c2e3c"/>
<polygon points="928,600 944,602 944,664 928,666" fill="#565a72"/>
<polygon points="944,602 975,607 975,668 944,662" fill="#777a92"/>
<polygon points="877,698 982,723 996,770 809,770 808,754" fill="url(#fl)"/>
<polygon points="876,597 938,579 1036,592 981,613" fill="#6c7492"/>
<g><circle cx="783.0" cy="543.0" r="11.0" fill="url(#g1)"/><circle cx="926.0" cy="511.0" r="8.0" fill="url(#g1)"/><polygon points="780.6,532.3 924.3,503.2 927.7,518.8 785.4,553.7" fill="url(#g1)"/></g>
<g><circle cx="926.0" cy="511.0" r="8.0" fill="url(#g2)"/><circle cx="1111.0" cy="528.0" r="9.5" fill="url(#g2)"/><polygon points="926.7,503.0 1111.9,518.5 1110.1,537.5 925.3,519.0" fill="url(#g2)"/></g>
<g><circle cx="936.0" cy="548.0" r="8.0" fill="url(#g3)"/><polygon points="919.7,512.7 928.3,550.1 943.7,545.9 932.3,509.3" fill="url(#g3)"/></g>
<g><polygon points="917.0,612.1 918.0,664.1 928.0,663.9 927.0,611.9" fill="url(#g4)"/></g>
<g><polygon points="933.0,600.2 935.0,664.2 945.0,663.8 943.0,599.8" fill="url(#g5)"/></g>
<g><circle cx="876.0" cy="597.0" r="7.5" fill="url(#g6)"/><circle cx="938.0" cy="579.0" r="5.5" fill="url(#g6)"/><polygon points="873.9,589.8 936.5,573.7 939.5,584.3 878.1,604.2" fill="url(#g6)"/></g>
<g><circle cx="938.0" cy="579.0" r="6.0" fill="url(#g7)"/><circle cx="1036.0" cy="592.0" r="6.5" fill="url(#g7)"/><polygon points="938.8,573.1 1036.9,585.6 1035.1,598.4 937.2,584.9" fill="url(#g7)"/></g>
<g><circle cx="941.0" cy="665.0" r="7.0" fill="url(#g8)"/><circle cx="1006.0" cy="683.0" r="7.0" fill="url(#g8)"/><polygon points="942.9,658.3 1007.9,676.3 1004.1,689.7 939.1,671.7" fill="url(#g8)"/></g>
<g><circle cx="938.0" cy="687.0" r="7.5" fill="url(#g9)"/><circle cx="1000.0" cy="703.0" r="7.5" fill="url(#g9)"/><polygon points="939.9,679.7 1001.9,695.7 998.1,710.3 936.1,694.3" fill="url(#g9)"/></g>
<g><circle cx="877.0" cy="698.0" r="8.5" fill="url(#g10)"/><circle cx="940.0" cy="664.0" r="6.0" fill="url(#g10)"/><polygon points="873.0,690.5 937.2,658.7 942.8,669.3 881.0,705.5" fill="url(#g10)"/></g>
<g><circle cx="1036.0" cy="592.0" r="7.0" fill="url(#g11)"/><circle cx="1034.0" cy="680.0" r="7.5" fill="url(#g11)"/><polygon points="1029.0,591.8 1026.5,679.8 1041.5,680.2 1043.0,592.2" fill="url(#g11)"/></g>
<g><circle cx="1034.0" cy="684.0" r="7.0" fill="url(#g12)"/><circle cx="1033.0" cy="694.0" r="7.0" fill="url(#g12)"/><polygon points="1027.0,683.3 1026.0,693.3 1040.0,694.7 1041.0,684.7" fill="url(#g12)"/></g>
<g><circle cx="1111.0" cy="528.0" r="7.0" fill="url(#g13)"/><circle cx="1036.0" cy="592.0" r="6.5" fill="url(#g13)"/><polygon points="1106.5,522.7 1031.8,587.1 1040.2,596.9 1115.5,533.3" fill="url(#g13)"/></g>
<g><circle cx="1027.0" cy="705.0" r="8.5" fill="url(#g14)"/><polygon points="1028.8,696.7 1088.0,708.7 1084.0,727.3 1025.2,713.3" fill="url(#g14)"/></g>
<g><circle cx="1111.0" cy="528.0" r="12.0" fill="url(#g15)"/><circle cx="1096.0" cy="719.0" r="11.5" fill="url(#g15)"/><polygon points="1099.0,527.1 1084.5,718.1 1107.5,719.9 1123.0,528.9" fill="url(#g15)"/></g>
<g><circle cx="1111.0" cy="528.0" r="10.0" fill="url(#g16)"/><circle cx="1016.0" cy="571.0" r="11.5" fill="url(#g16)"/><polygon points="1106.9,518.9 1011.3,560.5 1020.7,581.5 1115.1,537.1" fill="url(#g16)"/></g>
<g><circle cx="1096.0" cy="719.0" r="11.5" fill="url(#g17)"/><circle cx="1061.0" cy="767.0" r="13.5" fill="url(#g17)"/><polygon points="1086.7,712.2 1050.1,759.0 1071.9,775.0 1105.3,725.8" fill="url(#g17)"/></g>
<g><circle cx="876.0" cy="597.0" r="9.0" fill="url(#g18)"/><circle cx="877.0" cy="698.0" r="9.0" fill="url(#g18)"/><polygon points="867.0,597.1 868.0,698.1 886.0,697.9 885.0,596.9" fill="url(#g18)"/></g>
<g><circle cx="981.0" cy="613.0" r="11.5" fill="url(#g19)"/><circle cx="982.0" cy="723.0" r="11.5" fill="url(#g19)"/><polygon points="969.5,613.1 970.5,723.1 993.5,722.9 992.5,612.9" fill="url(#g19)"/></g>
<g><circle cx="876.0" cy="597.0" r="9.5" fill="url(#g20)"/><circle cx="979.0" cy="613.0" r="11.0" fill="url(#g20)"/><polygon points="877.5,587.6 980.7,602.1 977.3,623.9 874.5,606.4" fill="url(#g20)"/></g>
<g><circle cx="985.0" cy="610.0" r="10.5" fill="url(#g21)"/><circle cx="996.0" cy="587.0" r="9.0" fill="url(#g21)"/><polygon points="975.5,605.5 987.9,583.1 1004.1,590.9 994.5,614.5" fill="url(#g21)"/></g>
<g><circle cx="877.0" cy="698.0" r="8.0" fill="url(#g22)"/><circle cx="982.0" cy="723.0" r="9.5" fill="url(#g22)"/><polygon points="878.9,690.2 984.2,713.8 979.8,732.2 875.1,705.8" fill="url(#g22)"/></g>
<g><circle cx="783.0" cy="543.0" r="8.0" fill="url(#g23)"/><circle cx="876.0" cy="597.0" r="7.0" fill="url(#g23)"/><polygon points="779.0,549.9 872.5,603.1 879.5,590.9 787.0,536.1" fill="url(#g23)"/></g>
<g><circle cx="877.0" cy="698.0" r="7.5" fill="url(#g24)"/><circle cx="808.0" cy="754.0" r="10.0" fill="url(#g24)"/><polygon points="872.3,692.2 801.7,746.2 814.3,761.8 881.7,703.8" fill="url(#g24)"/></g>
<g><circle cx="982.0" cy="723.0" r="9.0" fill="url(#g25)"/><circle cx="996.0" cy="768.0" r="10.0" fill="url(#g25)"/><polygon points="973.4,725.7 986.5,771.0 1005.5,765.0 990.6,720.3" fill="url(#g25)"/></g>
<g><circle cx="783.0" cy="543.0" r="12.0" fill="url(#g26)"/><circle cx="808.0" cy="754.0" r="12.5" fill="url(#g26)"/><polygon points="771.1,544.4 795.6,755.5 820.4,752.5 794.9,541.6" fill="url(#g26)"/></g>
<g><circle cx="1016.0" cy="571.0" r="13.5" fill="url(#g27)"/><circle cx="1003.0" cy="770.0" r="14.0" fill="url(#g27)"/><polygon points="1002.5,570.1 989.0,769.1 1017.0,770.9 1029.5,571.9" fill="url(#g27)"/></g>
<g><circle cx="783.0" cy="543.0" r="10.5" fill="url(#g28)"/><circle cx="1013.0" cy="571.5" r="13.0" fill="url(#g28)"/><polygon points="784.3,532.6 1014.6,558.6 1011.4,584.4 781.7,553.4" fill="url(#g28)"/></g>
<g><circle cx="808.0" cy="754.0" r="9.0" fill="url(#g29)"/><circle cx="860.0" cy="775.0" r="10.0" fill="url(#g29)"/><polygon points="811.4,745.7 863.7,765.7 856.3,784.3 804.6,762.3" fill="url(#g29)"/></g></g></svg>

</body></html>
